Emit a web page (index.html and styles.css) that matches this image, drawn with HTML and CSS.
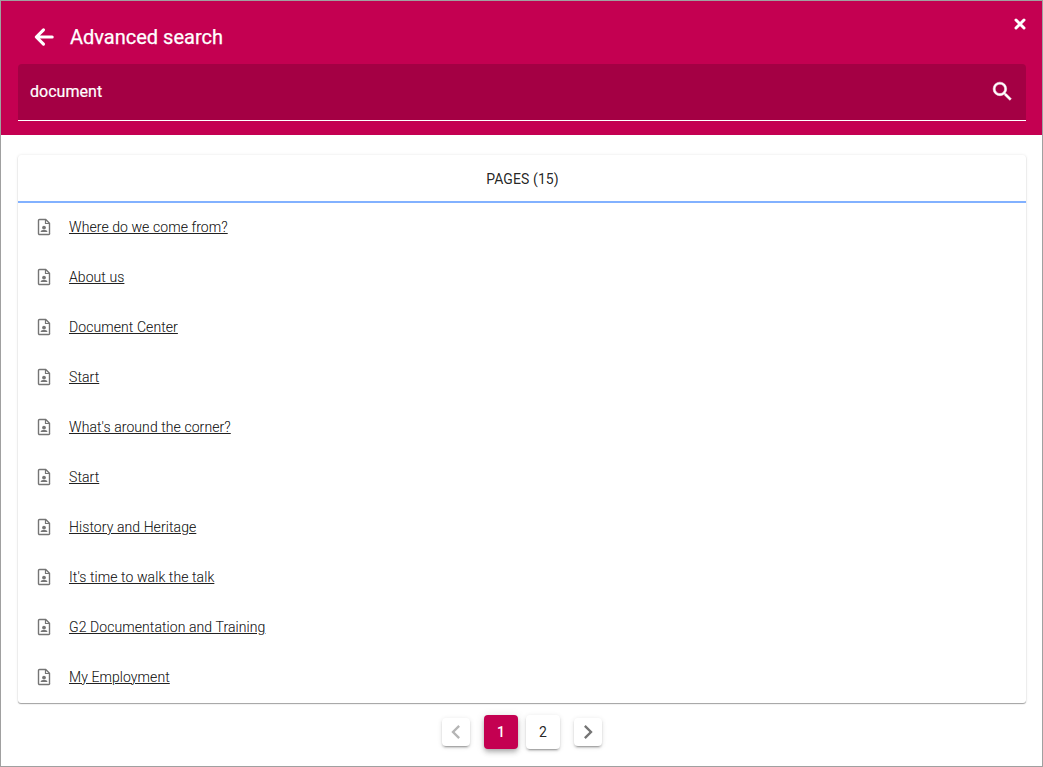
FILE: index.html
```html
<!DOCTYPE html>
<html lang="en">
<head>
<meta charset="utf-8">
<title>Advanced search</title>
<link rel="stylesheet" href="styles.css">
</head>
<body>
<svg class="defs" aria-hidden="true">
  <symbol id="page-icon" viewBox="0 0 14 18">
    <path d="M2.2 1.5H8.7L12.5 5.3V15A1 1 0 0 1 11.5 16.5H2.5A1 1 0 0 1 1.5 15.5V2.5A1 1 0 0 1 2.5 1.5Z" fill="none" stroke="currentColor" stroke-width="1.4"/>
    <path d="M8.5 1.5V5.5H12.5" fill="none" stroke="currentColor" stroke-width="1.2"/>
    <circle cx="7" cy="9.6" r="1.9" fill="currentColor"/>
    <path d="M3.7 14V13.3C3.7 12.3 5.8 11.9 7 11.9S10.3 12.3 10.3 13.3V14Z" fill="currentColor"/>
  </symbol>
</svg>
<div class="window">
  <header class="header">
    <div class="title-bar">
      <svg class="back" viewBox="0 0 20 20"><path d="M18.2 10H3M9.5 2.8L2.3 10L9.5 17.2" fill="none" stroke="currentColor" stroke-width="3.1" stroke-linecap="round" stroke-linejoin="round"/></svg>
      <h1 class="title">Advanced search</h1>
      <svg class="close" viewBox="0 0 12 12"><path d="M2 2L10 10M10 2L2 10" stroke="currentColor" stroke-width="3" stroke-linecap="round"/></svg>
    </div>
    <div class="search">
      <span class="query">document</span>
      <svg class="magnifier" viewBox="0 0 24 24"><path fill="currentColor" d="M15.5 14h-.79l-.28-.27A6.47 6.47 0 0 0 16 9.5 6.5 6.5 0 1 0 9.5 16c1.61 0 3.09-.59 4.23-1.57l.27.28v.79l5 4.99L20.49 19l-4.99-5zm-6 0C7.01 14 5 11.99 5 9.5S7.01 5 9.5 5 14 7.01 14 9.5 11.99 14 9.5 14z"/></svg>
    </div>
  </header>
  <main class="results">
    <div class="tab">PAGES (15)</div>
    <ul class="list">
      <li class="row"><svg class="icon"><use href="#page-icon"/></svg><a class="link">Where do we come from?</a></li>
      <li class="row"><svg class="icon"><use href="#page-icon"/></svg><a class="link">About us</a></li>
      <li class="row"><svg class="icon"><use href="#page-icon"/></svg><a class="link">Document Center</a></li>
      <li class="row"><svg class="icon"><use href="#page-icon"/></svg><a class="link">Start</a></li>
      <li class="row"><svg class="icon"><use href="#page-icon"/></svg><a class="link">What's around the corner?</a></li>
      <li class="row"><svg class="icon"><use href="#page-icon"/></svg><a class="link">Start</a></li>
      <li class="row"><svg class="icon"><use href="#page-icon"/></svg><a class="link">History and Heritage</a></li>
      <li class="row"><svg class="icon"><use href="#page-icon"/></svg><a class="link">It's time to walk the talk</a></li>
      <li class="row"><svg class="icon"><use href="#page-icon"/></svg><a class="link">G2 Documentation and Training</a></li>
      <li class="row"><svg class="icon"><use href="#page-icon"/></svg><a class="link">My Employment</a></li>
    </ul>
  </main>
  <nav class="pagination">
    <span class="step disabled"><svg class="chevron" viewBox="0 0 24 24"><path fill="currentColor" d="M15.41 7.41L14 6l-6 6 6 6 1.41-1.41L10.83 12z"/></svg></span>
    <span class="page active">1</span>
    <span class="page">2</span>
    <span class="step"><svg class="chevron" viewBox="0 0 24 24"><path fill="currentColor" d="M10 6L8.59 7.41 13.17 12l-4.58 4.59L10 18l6-6z"/></svg></span>
  </nav>
</div>
</body>
</html>
```
FILE: styles.css
```css
* { box-sizing: border-box; }
body { margin: 0; font-family: Roboto, sans-serif; color: rgba(0, 0, 0, .87); background: #fff; }
.defs { display: none; }
.window { height: 767px; border: 1px solid #a0a0a0; overflow: hidden; }
.header { height: 134px; padding: 0 16px 0 17px; background: #c40051; color: #fff; }
.title-bar { display: flex; height: 63px; padding-top: 9px; align-items: center; }
.back { width: 20px; height: 20px; margin-left: 16px; }
.title { flex: 1; margin: 0 0 0 16px; font-size: 20px; font-weight: 400; line-height: 24px; -webkit-text-stroke: .25px; }
.close { width: 12px; height: 12px; align-self: flex-start; margin-top: 7.5px; }
.search { display: flex; height: 57px; padding: 0 11.5px 0 12px; align-items: center; justify-content: space-between; background: #a40044; border-bottom: 1px solid #fff; border-radius: 4px 4px 0 0; }
.query { font-size: 16px; letter-spacing: .03px; line-height: 24px; -webkit-text-stroke: .2px; }
.magnifier { width: 25px; height: 25px; margin-bottom: 1px; stroke: currentColor; stroke-width: .5; }
.results { height: 548px; margin: 20px 16px 0 17px; border-radius: 3px; box-shadow: 0 1px 1px rgba(0, 0, 0, .35), 0 0 3px rgba(0, 0, 0, .1); }
.tab { height: 48px; border-bottom: 2px solid #82b1ff; text-align: center; font-size: 14px; line-height: 48px; letter-spacing: .1px; text-indent: 1px; }
.list { margin: 0; padding: 0; list-style: none; }
.row { display: flex; height: 50px; padding: 0 19px 2px; align-items: center; }
.icon { width: 14px; height: 18px; color: #757575; }
.link { margin-left: 18px; font-size: 14px; line-height: 20px; font-weight: 300; letter-spacing: .08px; text-decoration: underline; -webkit-text-stroke: .15px; }
.pagination { display: flex; margin-top: 12px; justify-content: center; align-items: center; }
.page, .step { display: flex; align-items: center; justify-content: center; border-radius: 4px; background: #fff; box-shadow: 0 3px 1px -2px rgba(0, 0, 0, .2), 0 2px 2px rgba(0, 0, 0, .14), 0 1px 5px rgba(0, 0, 0, .12); }
.page { width: 34px; height: 34px; margin: 0 4px; padding-left: 1px; font-size: 14px; }
.step { width: 28px; height: 28px; margin: 0 10px; color: #757575; }
.disabled { color: #b5b5b5; }
.active { background: #c40051; color: #fff; font-weight: 500; box-shadow: 0 2px 4px -1px rgba(0, 0, 0, .2), 0 4px 5px rgba(0, 0, 0, .14), 0 1px 10px rgba(0, 0, 0, .12); }
.chevron { flex: none; width: 28px; height: 28px; }
```
